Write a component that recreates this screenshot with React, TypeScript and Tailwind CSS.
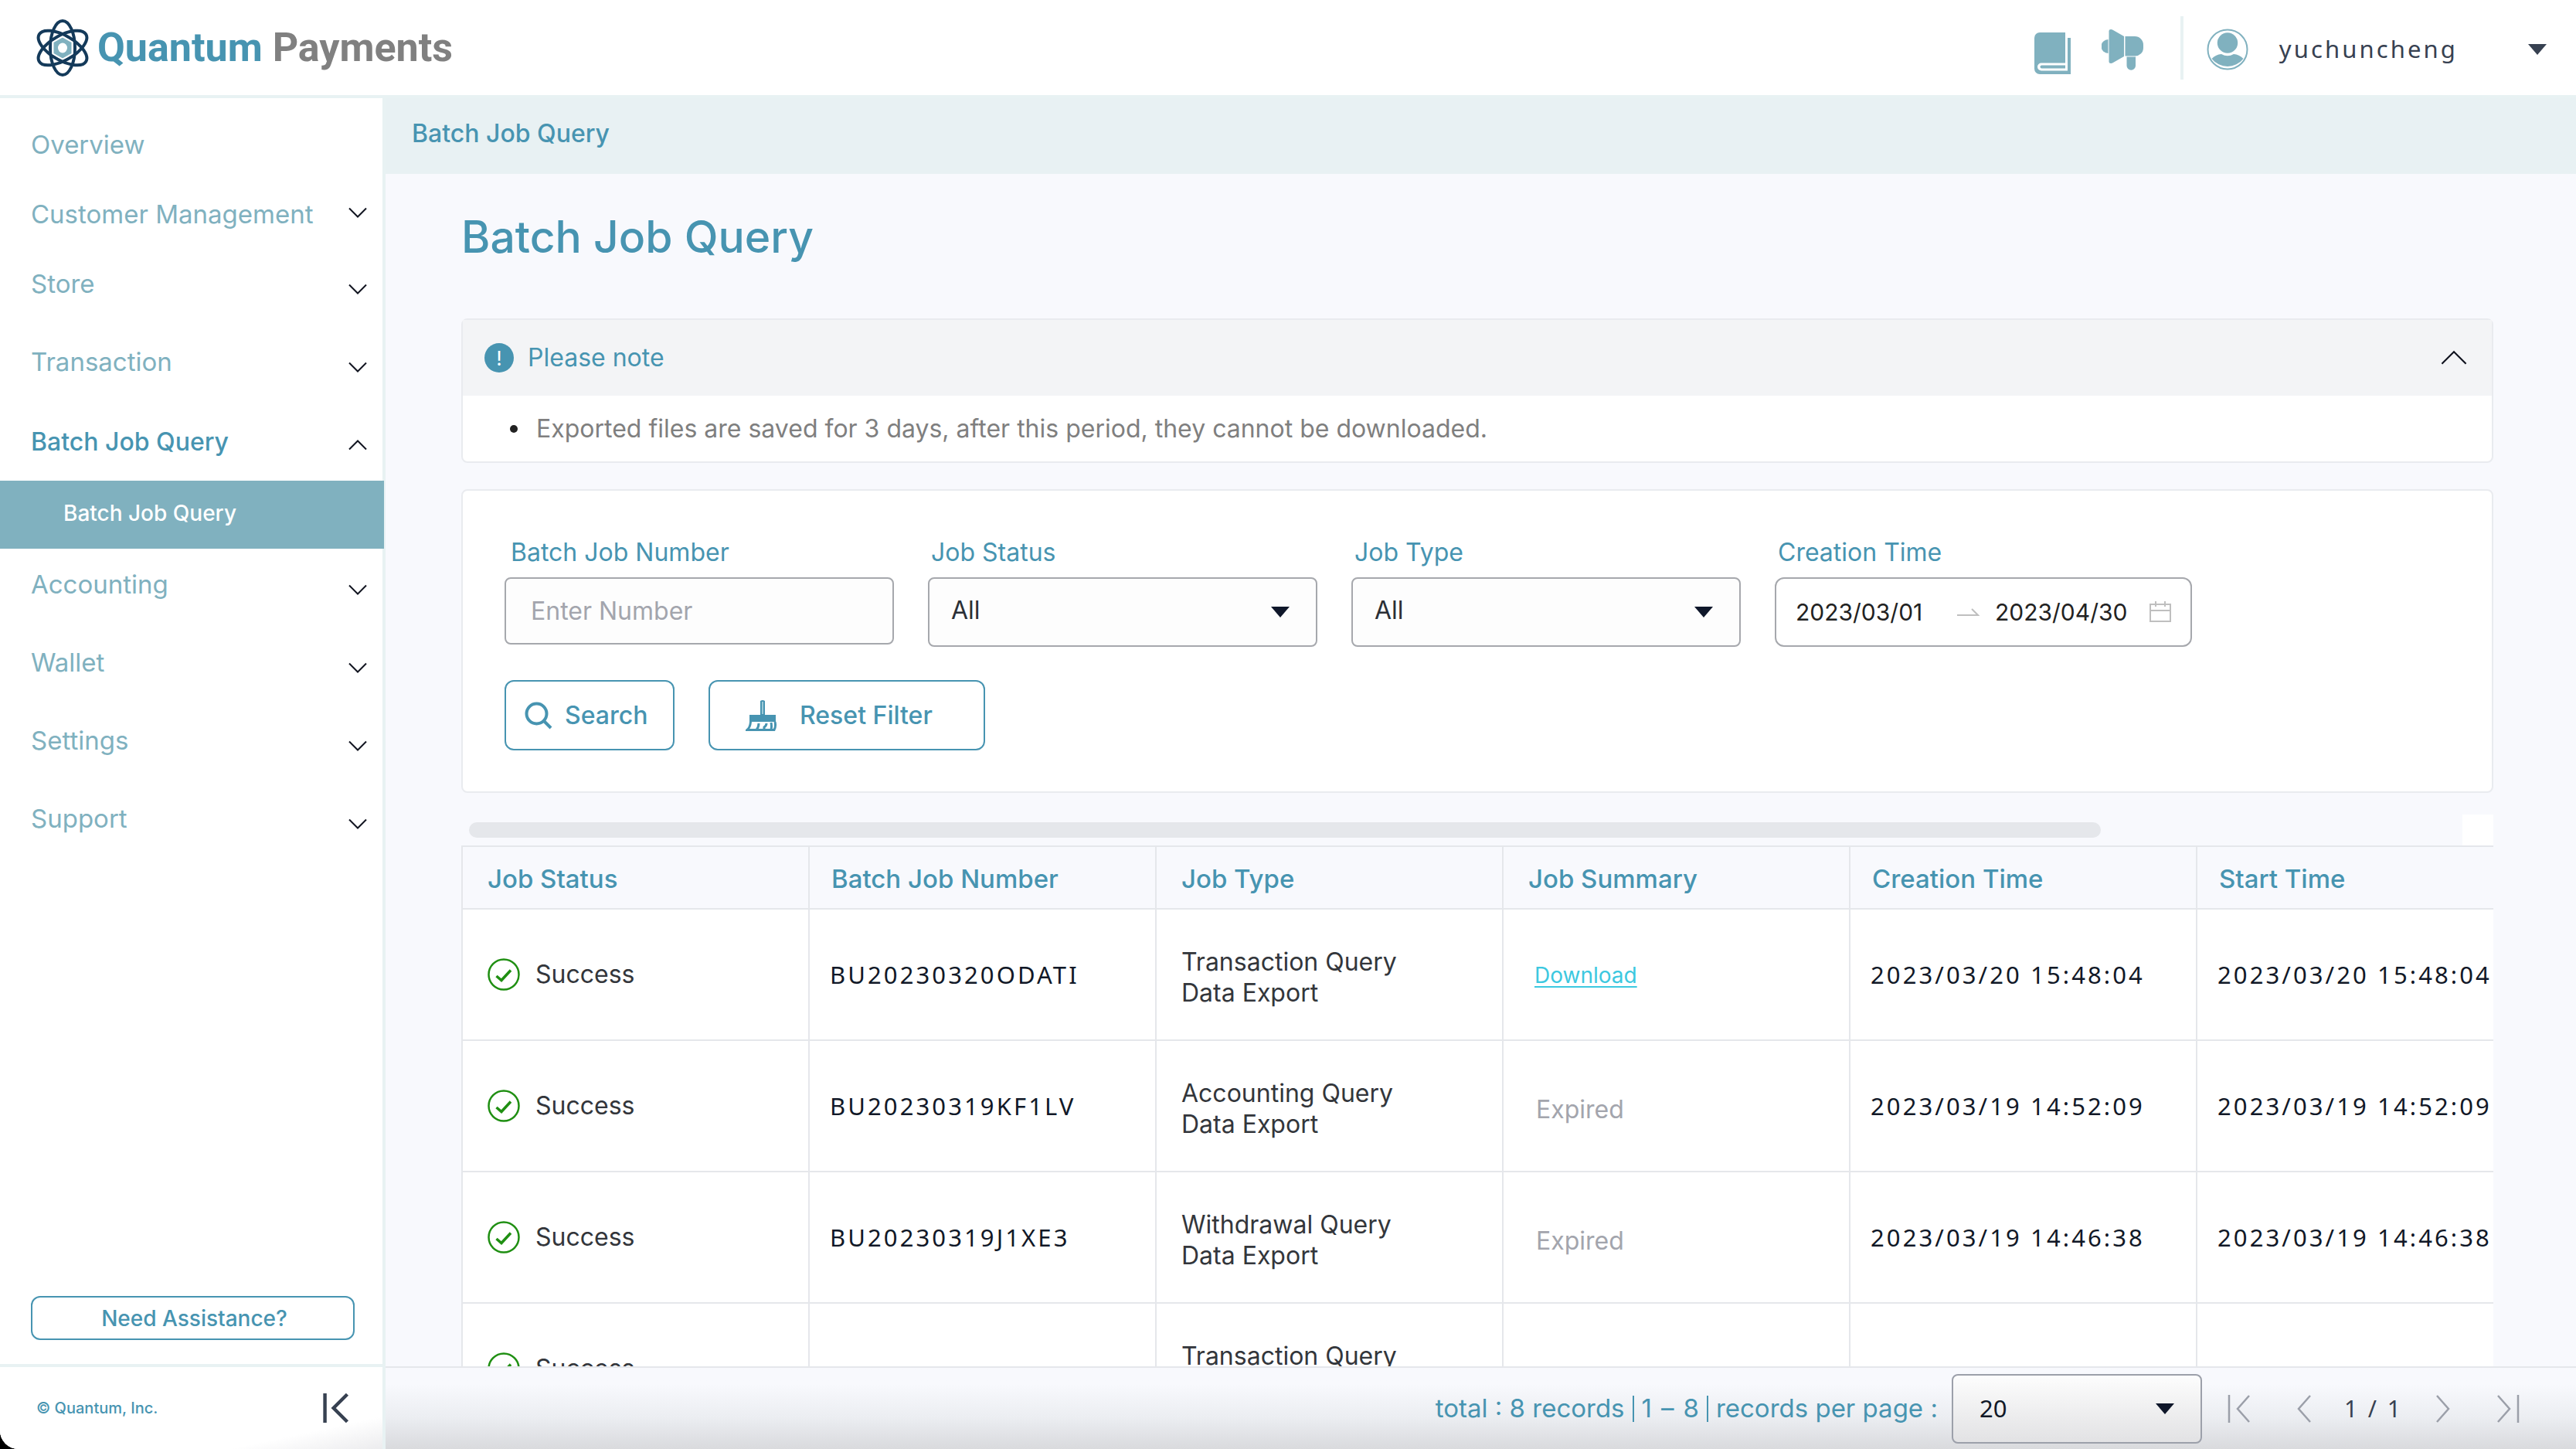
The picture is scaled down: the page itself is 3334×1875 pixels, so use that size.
import { useState } from "react";
import type { ReactNode } from "react";

function AtomLogo() {
  return (
    <svg viewBox="-35 -37 70 74" className="h-[74px] w-[70px]" aria-hidden="true">
      <g fill="none" stroke="#143a5a" strokeWidth="4">
        <ellipse rx="16" ry="35" />
        <ellipse rx="16" ry="35" transform="rotate(60)" />
        <ellipse rx="16" ry="35" transform="rotate(-60)" />
      </g>
      <path
        d="M0 -14.5L12.5 -7.5V7.5L0 14.5L-12.5 7.5V-7.5Z"
        fill="#80b1bf"
        stroke="#fff"
        strokeWidth="2"
        strokeLinejoin="round"
      />
      <ellipse rx="6" ry="6.5" fill="#fff" />
    </svg>
  );
}

function BookIcon() {
  return (
    <svg viewBox="0 0 47 54" className="h-[54px] w-[47px]" fill="#80b1bf" aria-hidden="true">
      <path d="M7 0H40V39.5H9a5 5 0 0 0 0 10H43V7H47V54H7A7 7 0 0 1 0 47V7A7 7 0 0 1 7 0Z" />
      <path d="M9.500 42.500H40V46.500H9.500a2 2 0 0 1 0-4Z" />
    </svg>
  );
}

function MegaphoneIcon() {
  return (
    <svg viewBox="0 0 54 54" className="size-[54px]" fill="#80b1bf" aria-hidden="true">
      <path d="M8.500 13A9 9 0 0 0 8.500 31Z" />
      <path d="M9.500 2Q9.500 0 12 0Q13.500 0 15 1L29 9V35L15 43Q13.500 44 12 44Q9.500 44 9.500 42Z" />
      <path d="M30.500 9H43A11 11 0 0 1 54 20V24A10.500 10.500 0 0 1 43 34.500H30.500Z" />
      <path d="M32.500 35.500H44V47A5.700 5.700 0 0 1 32.500 47Z" />
    </svg>
  );
}

function AvatarIcon() {
  return (
    <svg viewBox="0 0 54 54" className="size-[54px]" aria-hidden="true">
      <circle cx="27" cy="27" r="25.500" fill="#fff" stroke="#80b1bf" strokeWidth="2" />
      <circle cx="27" cy="18.500" r="13.200" fill="#80b1bf" />
      <path d="M6.500 39Q12 33.500 19 33Q27 37.500 35 33Q42 33.500 47.500 39A26 26 0 0 1 6.500 39Z" fill="#80b1bf" />
    </svg>
  );
}

function Caret({ color }: { color: string }) {
  return (
    <svg viewBox="0 0 24 14" className="h-[14px] w-6" aria-hidden="true">
      <path d="M0 0H24L12 14Z" fill={color} />
    </svg>
  );
}

function Chevron({ up, large }: { up?: boolean; large?: boolean }) {
  return (
    <svg
      viewBox="0 0 24 14"
      className={large ? "h-[20px] w-[34px]" : "h-[14px] w-6"}
      fill="none"
      stroke="#10131f"
      strokeWidth={large ? 1.5 : 2}
      aria-hidden="true"
    >
      <path d={up ? "M1 12.500L12 1.500L23 12.500" : "M1 1.500L12 12.500L23 1.500"} />
    </svg>
  );
}

function SearchIcon() {
  return (
    <svg viewBox="0 0 36 36" className="size-9" fill="none" stroke="#4794b1" strokeWidth="4" aria-hidden="true">
      <circle cx="15.500" cy="15.500" r="13" />
      <path d="M24.500 24.500L34 34" />
    </svg>
  );
}

function BroomIcon() {
  return (
    <svg viewBox="0 0 42 42" className="size-[42px]" aria-hidden="true">
      <path d="M19 2Q22 0 25 2V20H39V29H5V20H19Z" fill="#4794b1" />
      <path d="M22 3V19" stroke="#b9dde6" strokeWidth="1.500" />
      <path
        d="M6.500 29Q6 36 2 39.500H37Q39.500 35 38 29M14 39.500Q17 36 17 31M24 39.500V36Q27 34 27 31M33 39Q34 35 33 30"
        fill="none"
        stroke="#4794b1"
        strokeWidth="3"
      />
    </svg>
  );
}

function CalendarIcon() {
  return (
    <svg viewBox="0 0 30 30" className="size-[30px]" fill="none" stroke="#bfbfbf" strokeWidth="2" aria-hidden="true">
      <path d="M2 5H28V27H2ZM2 13H28M9 1V8M21 1V8" />
    </svg>
  );
}

function CheckIcon() {
  return (
    <svg viewBox="0 0 42 42" className="size-[42px] shrink-0" fill="none" stroke="#1f8f12" aria-hidden="true">
      <circle cx="21" cy="21" r="19.500" strokeWidth="2.500" />
      <path d="M11.500 23L18 28.500L30 15.500" strokeWidth="3.500" />
    </svg>
  );
}

function Arrow({ path, label, dark }: { path: string; label: string; dark?: boolean }) {
  return (
    <button type="button" aria-label={label} className={dark ? "text-[#374151]" : "text-[#9b9fa9]"}>
      <svg
        viewBox="0 0 32 36"
        className={dark ? "h-10 w-9" : "h-[36px] w-8"}
        fill="none"
        stroke="currentColor"
        strokeWidth={dark ? 4 : 2.5}
        aria-hidden="true"
      >
        <path d={path} />
      </svg>
    </button>
  );
}

function NavItem({ label, open, active }: { label: string; open?: boolean; active?: boolean }) {
  return (
    <button
      type="button"
      aria-expanded={!!open}
      className={
        active
          ? "flex h-[101px] w-full items-center justify-between pl-10 pr-5 text-[32px] text-[#4794b1] font-medium"
          : "flex h-[101px] w-full items-center justify-between pl-10 pr-5 text-[#80b1bf]"
      }
    >
      <span className={active ? "" : "pb-1.5"}>{label}</span>
      <span className="pt-2">
        <Chevron up={open} />
      </span>
    </button>
  );
}

function Sidebar() {
  return (
    <aside className="flex w-[499px] shrink-0 flex-col border-r-4 border-[#e8f2f3] bg-white">
      <nav className="flex flex-1 flex-col pt-4 text-[33px] leading-10">
        <a href="#overview" className="flex h-[88px] items-center pl-10 text-[#80b1bf]">
          Overview
        </a>
        <button type="button" aria-expanded={false} className="flex h-[88px] w-full items-center justify-between pl-10 pr-5 text-[#80b1bf]">
          <span className="pt-1">Customer Management</span>
          <Chevron />
        </button>
        <NavItem label="Store" />
        <NavItem label="Transaction" />
        <NavItem label="Batch Job Query" open active />
        <a
          href="#batch"
          aria-current="page"
          className="-mr-0.5 -mb-0.5 flex h-[88px] shrink-0 items-center bg-[#80b1bf] pb-1 pl-[82px] text-[28px] font-medium text-white"
        >
          Batch Job Query
        </a>
        <NavItem label="Accounting" />
        <NavItem label="Wallet" />
        <NavItem label="Settings" />
        <NavItem label="Support" />
      </nav>
      <div className="pb-[31px] pl-10 pr-9">
        <button type="button" className="h-[57px] w-full rounded-xl border-2 border-[#4794b1] pl-1 text-[28px] font-medium text-[#4794b1]">
          Need Assistance?
        </button>
      </div>
      <div className="flex h-[110px] items-center justify-between border-t-4 border-[#e8f2f3] bg-linear-to-br from-white from-80% to-[#ececee] pl-[47px] pr-[42px]">
        <small className="text-[20px] font-medium text-[#4794b1]">© Quantum, Inc.</small>
        <Arrow dark label="Collapse menu" path="M3 1V35M29 2L13 18L29 34" />
      </div>
    </aside>
  );
}

function SelectField({ id, label, options }: { id: string; label: string; options: string[] }) {
  return (
    <div className="w-[504px]">
      <label htmlFor={id} className="block pl-1 leading-10 text-[#4794b1]">
        {label}
      </label>
      <div className="relative mt-3">
        <select id={id} className="h-[90px] w-full appearance-none rounded-lg border-2 border-[#a6a8ad] bg-[#fdfdfd] px-7 pb-1 text-[#2b2f36]">
          {options.map((o) => (
            <option key={o}>{o}</option>
          ))}
        </select>
        <span className="pointer-events-none absolute inset-y-0 right-9 flex items-center">
          <Caret color="#0f172a" />
        </span>
      </div>
    </div>
  );
}

function Filters() {
  const [from, setFrom] = useState("2023/03/01");
  const [to, setTo] = useState("2023/04/30");
  return (
    <form className="mt-[34px] rounded-lg border-2 border-[#e9ebef] bg-white px-[54px] pb-[53px] pt-[60px] text-[32px]">
      <div className="flex gap-11">
        <div className="w-[504px]">
          <label htmlFor="number" className="block pl-2 leading-10 text-[#4794b1]">
            Batch Job Number
          </label>
          <input
            id="number"
            placeholder="Enter Number"
            className="mt-3 h-[87px] w-full rounded-lg border-2 border-[#a6a8ad] bg-[#fdfdfd] px-8 placeholder:text-[#a3a5ad]"
          />
        </div>
        <SelectField id="status" label="Job Status" options={["All", "Success"]} />
        <SelectField id="type" label="Job Type" options={["All", "Transaction Query", "Accounting Query"]} />
        <div className="w-[540px]">
          <label htmlFor="from" className="block pl-1 leading-10 text-[#4794b1]">
            Creation Time
          </label>
          <div className="mt-3 flex h-[90px] items-center rounded-xl border-2 border-[#a6a8ad] bg-white pl-[25px] pr-6 text-[30px] text-[#222]">
            <input id="from" value={from} onChange={(e) => setFrom(e.target.value)} className="w-[208px]" />
            <svg viewBox="0 0 30 16" className="h-4 w-[30px]" fill="none" stroke="#bfbfbf" strokeWidth="2" aria-hidden="true">
              <path d="M1 12H28L20 4" />
            </svg>
            <input aria-label="Creation time to" value={to} onChange={(e) => setTo(e.target.value)} className="ml-5 w-[184px]" />
            <span className="ml-auto">
              <CalendarIcon />
            </span>
          </div>
        </div>
      </div>
      <div className="mt-[43px] flex gap-11 font-medium text-[#4794b1]">
        <button type="button" className="flex h-[91px] w-[220px] items-center gap-4 rounded-xl border-2 border-[#4794b1] pl-6">
          <SearchIcon />
          Search
        </button>
        <button type="button" className="flex h-[91px] w-[358px] items-center gap-7 rounded-xl border-2 border-[#4794b1] pl-[46px]">
          <BroomIcon />
          Reset Filter
        </button>
      </div>
    </form>
  );
}

type Job = { id: string; type: string; summary: "download" | "expired" | ""; time: string };

const jobs: Job[] = [
  { id: "BU20230320ODATI", type: "Transaction Query", summary: "download", time: "2023/03/20 15:48:04" },
  { id: "BU20230319KF1LV", type: "Accounting Query", summary: "expired", time: "2023/03/19 14:52:09" },
  { id: "BU20230319J1XE3", type: "Withdrawal Query", summary: "expired", time: "2023/03/19 14:46:38" },
  { id: "", type: "Transaction Query", summary: "", time: "" },
];

function Th({ children, tight }: { children: ReactNode; tight?: boolean }) {
  return (
    <th
      className={
        tight
          ? "h-[81px] border-2 border-[#e5e7eb] pt-1 pl-7 text-left font-medium text-[#4794b1]"
          : "h-[81px] border-2 border-[#e5e7eb] pt-1 pl-8 text-left font-medium text-[#4794b1]"
      }
    >
      {children}
    </th>
  );
}

function Td({ children, mono }: { children?: ReactNode; mono?: boolean }) {
  return (
    <td
      className={
        mono
          ? "h-[170px] border-2 border-[#e5e7eb] bg-white pl-[26px] font-['Noto_Sans',sans-serif] text-[31px] tracking-widest whitespace-nowrap text-[#111827]"
          : "h-[170px] border-2 border-[#e5e7eb] bg-white pl-8 text-[32px] leading-10 text-[#33363b]"
      }
    >
      {children}
    </td>
  );
}

function JobTable() {
  return (
    <div className="mt-7 overflow-hidden">
      <div className="flex h-10 items-center justify-between pl-[10px]">
        <div className="h-5 w-[2112px] rounded-full bg-[#e5e7eb]" />
        <div className="size-10 shrink-0 bg-white" />
      </div>
      <table className="w-[2696px] table-fixed border-collapse text-[33px]">
        <thead>
          <tr>
            <Th>Job Status</Th>
            <Th tight>Batch Job Number</Th>
            <Th>Job Type</Th>
            <Th>Job Summary</Th>
            <Th tight>Creation Time</Th>
            <Th tight>Start Time</Th>
          </tr>
        </thead>
        <tbody>
          {jobs.map((job, i) => (
            <tr key={i}>
              <Td>
                <span className="flex items-center gap-5">
                  <CheckIcon />
                  Success
                </span>
              </Td>
              <Td mono>{job.id}</Td>
              <Td>
                <span className="block pt-2">
                  {job.type}
                  <br />
                  Data Export
                </span>
              </Td>
              <Td>
                {job.summary === "download" && (
                  <a href="#download" className="pl-2 text-[28px] text-[#3cc8e0] underline underline-offset-4">
                    Download
                  </a>
                )}
                {job.summary === "expired" && <span className="block pt-2.5 pl-2.5 text-[#a3a5ad]">Expired</span>}
              </Td>
              <Td mono>{job.time}</Td>
              <Td mono>{job.time}</Td>
            </tr>
          ))}
        </tbody>
      </table>
    </div>
  );
}

function Pager() {
  return (
    <footer className="flex h-[107px] shrink-0 items-center justify-end border-t-2 border-[#e5e7eb] bg-linear-to-b from-[#f8f9fd] from-20% via-[#eceef2] via-60% to-[#d9dadd] pr-[72px] text-[33px] text-[#4794b1]">
      <span>total : 8 records</span>
      <span className="mx-2.5 h-[34px] w-0.5 bg-[#4794b1]" />
      <span className="flex gap-3">
        <span>1</span>
        <span>–</span>
        <span>8</span>
      </span>
      <span className="mx-2.5 h-[34px] w-0.5 bg-[#4794b1]" />
      <label htmlFor="size">records per page :</label>
      <div className="relative ml-[18px] w-[324px]">
        <select
          id="size"
          className="h-[90px] w-full appearance-none rounded-lg border-2 border-[#9ca0aa] bg-linear-to-b from-[#fdfdfd] to-[#e2e2e4] px-[34px] font-['Noto_Sans',sans-serif] text-[31px] text-[#111827]"
        >
          <option>20</option>
          <option>50</option>
        </select>
        <span className="pointer-events-none absolute inset-y-0 right-9 flex items-center">
          <Caret color="#0f172a" />
        </span>
      </div>
      <div className="ml-8 flex items-center text-[#374151]">
        <Arrow label="First page" path="M3 0V36M29 1L14 18L29 35" />
        <span className="ml-[52px] flex">
          <Arrow label="Previous page" path="M24 1L9 18L24 35" />
        </span>
        <span className="mx-9 font-['Noto_Sans',sans-serif] text-[30px] tracking-widest">1 / 1</span>
        <Arrow label="Next page" path="M8 1L23 18L8 35" />
        <span className="ml-[52px] flex">
          <Arrow label="Last page" path="M3 1L18 18L3 35M29 0V36" />
        </span>
      </div>
    </footer>
  );
}

export default function App() {
  return (
    <div className="bg-black">
      <div className="flex h-screen flex-col overflow-hidden rounded-bl-[24px] bg-white font-[Inter,sans-serif]">
        <header className="flex h-[127px] shrink-0 items-center border-b-4 border-[#e8f2f3] pl-[46px] pr-[38px]">
          <AtomLogo />
          <div className="ml-2.5 font-[Roboto,sans-serif] text-[52px] leading-none">
            <span className="font-bold text-[#4794b1]">Quantum</span>{" "}
            <span className="font-bold text-[#808080]">Payments</span>
          </div>
          <div className="ml-auto flex items-center">
            <button type="button" aria-label="Documentation" className="pt-3.5">
              <BookIcon />
            </button>
            <button type="button" aria-label="Announcements" className="ml-10 pt-1.5">
              <MegaphoneIcon />
            </button>
            <div className="ml-12 h-[82px] w-1 bg-[#e8f2f3]" />
            <button type="button" className="ml-[30px] flex items-center pt-1 font-['Noto_Sans',sans-serif] text-[31px] tracking-widest text-[#374151]">
              <AvatarIcon />
              <span className="ml-10 mr-[91px]">yuchuncheng</span>
              <Caret color="#374151" />
            </button>
          </div>
        </header>
        <div className="flex min-h-0 flex-1">
          <Sidebar />
          <main className="flex min-w-0 flex-1 flex-col bg-[#f8f9fd]">
            <div className="flex h-[98px] shrink-0 items-center bg-[#e8f1f3] pb-1.5 pl-[34px] text-[32px] font-medium text-[#4794b1]">
              Batch Job Query
            </div>
            <div className="min-h-0 flex-1 overflow-hidden pl-[98px] pr-[107px] pt-12">
              <h1 className="text-[57px] leading-[68px] font-medium text-[#4794b1]">Batch Job Query</h1>
              <section className="mt-[71px] rounded-lg border-2 border-[#e9ebef] bg-white text-[32px]">
                <button type="button" aria-expanded className="flex h-[98px] w-full items-center bg-[#f3f4f6] pl-7 pr-8 text-[#4794b1]">
                  <span className="flex size-[38px] items-center justify-center rounded-full bg-[#4794b1] text-[26px] text-white">!</span>
                  <span className="ml-[18px]">Please note</span>
                  <span className="ml-auto">
                    <Chevron up large />
                  </span>
                </button>
                <ul className="flex h-[85px] items-center pl-[61px] text-[#7f7f7f]">
                  <li className="flex items-center gap-6">
                    <span className="size-2.5 rounded-full bg-[#222]" />
                    Exported files are saved for 3 days, after this period, they cannot be downloaded.
                  </li>
                </ul>
              </section>
              <Filters />
              <JobTable />
            </div>
            <Pager />
          </main>
        </div>
      </div>
    </div>
  );
}
